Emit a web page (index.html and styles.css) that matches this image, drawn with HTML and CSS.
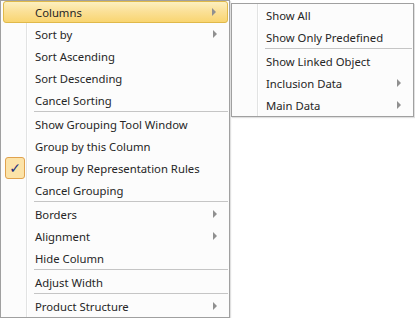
FILE: index.html
```html
<!DOCTYPE html>
<html lang="en">

<head>
    <meta charset="UTF-8">
    <meta name="viewport" content="width=device-width, initial-scale=1.0">
    <title>Column menu</title>
    <link rel="stylesheet" href="styles.css">
</head>

<body>
    <div class="desk">
        <ul class="menu menu-main">
            <li class="item has-sub hover">Columns</li>
            <li class="item has-sub">Sort by</li>
            <li class="item">Sort Ascending</li>
            <li class="item">Sort Descending</li>
            <li class="item">Cancel Sorting</li>
            <li class="sep"></li>
            <li class="item">Show Grouping Tool Window</li>
            <li class="item">Group by this Column</li>
            <li class="item"><span class="check">&#10003;</span>Group by Representation Rules</li>
            <li class="item">Cancel Grouping</li>
            <li class="sep"></li>
            <li class="item has-sub">Borders</li>
            <li class="item has-sub">Alignment</li>
            <li class="item">Hide Column</li>
            <li class="sep"></li>
            <li class="item">Adjust Width</li>
            <li class="sep"></li>
            <li class="item has-sub">Product Structure</li>
        </ul>
        <ul class="menu menu-sub">
            <li class="item">Show All</li>
            <li class="item">Show Only Predefined</li>
            <li class="sep"></li>
            <li class="item">Show Linked Object</li>
            <li class="item has-sub">Inclusion Data</li>
            <li class="item has-sub">Main Data</li>
        </ul>
    </div>
</body>

</html>
```

FILE: styles.css
```css
body {
    margin: 0;
    background-color: #fff;
    font-family: "Noto Sans", "Open Sans", sans-serif;
    font-size: 11.3px;
    color: #262626;
}

.desk {
    display: flex;
    align-items: flex-start;
}

.menu {
    margin: 0;
    padding: 0;
    list-style: none;
    border: 1px solid #a0a0a0;
    /* gutter line for icons */
    background: linear-gradient(to right, #fcfcfc 25px, #e2e3e3 25px, #e2e3e3 26px, #fff 26px, #fff 27px, #fcfcfc 27px);
    box-shadow: 1px 1px 1px rgba(0, 0, 0, .12);
}

.menu-main {
    width: 228px;
    height: 316px;
}

.menu-sub {
    width: 181px;
    margin-top: 3px;
    margin-left: 1px;
}

.menu .item {
    position: relative;
    display: flex;
    align-items: center;
    height: 22px;
    padding-left: 34px;
    white-space: nowrap;
}

.menu .item.has-sub::after {
    content: '';
    position: absolute;
    right: 12px;
    top: 7px;
    border-top: 4px solid transparent;
    border-bottom: 4px solid transparent;
    border-left: 4px solid #909090;
}

.menu .item.hover {
    height: 20px;
    margin: 0 1px 0 2px;
    padding-left: 31px;
    border: 1px solid #e0b94a;
    border-radius: 3px;
    background-color: #fbdf8c;
    background-image: linear-gradient(#fdf0c0, #fbe199 45%, #f9d571);
}

.menu .item.hover::after {
    top: 6px;
    right: 11px;
}

.check {
    position: absolute;
    top: 0;
    left: 4px;
    display: flex;
    align-items: center;
    justify-content: center;
    width: 18px;
    height: 20px;
    border: 1px solid #e0a24e;
    border-radius: 3px;
    background-color: #fce3a8;
    color: #1c2f7c;
    font-family: "DejaVu Sans", sans-serif;
    font-size: 14px;
}

.menu .sep {
    height: 1px;
    margin: 0 1px 1px 33px;
    background-color: #c5c5c5;
}
```
